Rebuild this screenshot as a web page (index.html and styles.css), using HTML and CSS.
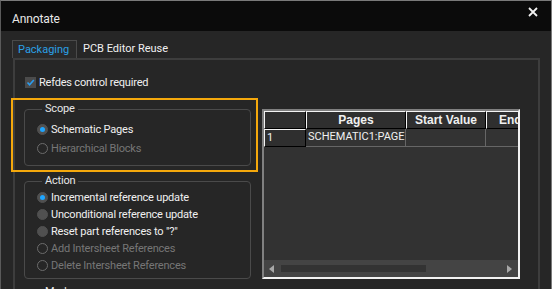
FILE: index.html
```html
<!DOCTYPE html>
<html lang="en">
<head>
    <meta charset="UTF-8">
    <meta name="viewport" content="width=device-width, initial-scale=1.0">
    <title>Annotate</title>
    <link rel="stylesheet" href="styles.css">
</head>
<body>
    <div class="window">
        <div class="titlebar">
            <span class="title">Annotate</span>
            <svg class="close" width="10" height="10" viewBox="0 0 10 10">
                <path d="M1 1L9 9M9 1L1 9" stroke="#f2f2f2" stroke-width="1.8" fill="none"/>
            </svg>
        </div>

        <div class="client">
            <div class="tabs">
                <div class="tab active">Packaging</div>
                <div class="tab">PCB Editor Reuse</div>
            </div>

            <div class="panel">
                <div class="check-row">
                    <span class="checkbox">
                        <svg width="11" height="11" viewBox="0 0 11 11">
                            <path d="M2.5 5.5L4.6 7.8L8.8 3" stroke="#2a9df0" stroke-width="1.6" fill="none"/>
                        </svg>
                    </span>
                    Refdes control required
                </div>

                <div class="content">
                    <div class="options">
                        <fieldset class="group scope">
                            <legend>Scope</legend>
                            <div class="option"><span class="radio checked"></span>Schematic Pages</div>
                            <div class="option disabled"><span class="radio"></span>Hierarchical Blocks</div>
                        </fieldset>

                        <fieldset class="group action">
                            <legend>Action</legend>
                            <div class="option"><span class="radio checked"></span>Incremental reference update</div>
                            <div class="option"><span class="radio filled"></span>Unconditional reference update</div>
                            <div class="option"><span class="radio filled"></span>Reset part references to "?"</div>
                            <div class="option disabled"><span class="radio"></span>Add Intersheet References</div>
                            <div class="option disabled"><span class="radio"></span>Delete Intersheet References</div>
                        </fieldset>

                        <fieldset class="group mode">
                            <legend>Mode</legend>
                        </fieldset>
                    </div>

                    <div class="grid">
                        <div class="grid-row head">
                            <div class="hcell"></div>
                            <div class="hcell">Pages</div>
                            <div class="hcell">Start Value</div>
                            <div class="hcell">End</div>
                        </div>
                        <div class="grid-row">
                            <div class="rowhead">1</div>
                            <div class="cell">SCHEMATIC1:PAGE</div>
                            <div class="cell"></div>
                            <div class="cell"></div>
                        </div>
                        <div class="grid-fill"></div>
                        <div class="hscroll">
                            <span class="arrow left"></span>
                            <span class="thumb"></span>
                            <span class="arrow right"></span>
                        </div>
                    </div>
                </div>
            </div>
        </div>

        <div class="highlight"></div>
    </div>
</body>
</html>
```

FILE: styles.css
```css
body {
    margin: 0;
    background-color: #262626;
    font-family: Roboto, "Liberation Sans", Arial, sans-serif;
    font-size: 11px;
    letter-spacing: -0.2px;
    color: #f0f0f0;
}

.window {
    position: relative;
    width: 552px;
    height: 289px;
    box-sizing: border-box;
    overflow: hidden;
    border-top: 1px solid #7a7a7a;
    border-left: 1px solid #5a5a5a;
    border-right: 1px solid #7a7a7a;
    background-color: #262626;
}

.titlebar {
    height: 30px;
    display: flex;
    align-items: center;
    justify-content: space-between;
    padding: 5px 13px 0 11px;
    box-sizing: border-box;
    background-color: #0b0b0b;
}

.title {
    font-size: 12px;
    letter-spacing: -0.1px;
    color: #e8e8e8;
}

.close {
    margin-top: -13px;
}

/* tabs */
.tabs {
    display: flex;
    align-items: flex-end;
    margin-top: 9px;
    padding-left: 11px;
    height: 18px;
}

.tab {
    height: 18px;
    line-height: 18px;
    padding: 0 6px;
    color: #f0f0f0;
    font-size: 11px;
    letter-spacing: 0;
}

.tab.active {
    box-sizing: border-box;
    width: 65px;
    padding: 0 0 0 5px;
    border: 1px solid #4a4a4a;
    border-bottom: none;
    background-color: #2a2a2a;
    color: #2aa0e6;
}

.panel {
    margin-left: 12px;
    width: 527px;
    height: 240px;
    box-sizing: border-box;
    border: 2px solid #3d3d3d;
    border-bottom: none;
}

.check-row {
    display: flex;
    align-items: center;
    height: 14px;
    margin-top: 15px;
    padding-left: 10px;
}

.checkbox {
    width: 11px;
    height: 11px;
    margin-right: 3px;
    background-color: #4b4b4b;
    display: flex;
}

.content {
    display: flex;
    align-items: flex-start;
    margin-top: 13px;
    padding-left: 9px;
}

.options {
    width: 227px;
}

/* group boxes */
.group {
    margin: 0;
    padding: 4px 0 7px 12px;
    border: 1px solid #4a4a4a;
    border-radius: 4px;
}

.group legend {
    margin-left: 5px;
    padding: 0 3px;
    line-height: 14px;
    color: #e6e6e6;
}

.scope .option {
    height: 19px;
}

.action {
    margin-top: 8px;
    padding-top: 1px;
    padding-bottom: 4px;
}

.action .option {
    height: 17px;
}

.mode {
    margin-top: 6px;
    height: 40px;
}

.option {
    display: flex;
    align-items: center;
}

.option.disabled {
    color: #767676;
}

.radio {
    width: 11px;
    height: 11px;
    box-sizing: border-box;
    border-radius: 50%;
    margin-right: 3px;
    border: 1px solid #6c6c6c;
    display: flex;
    align-items: center;
    justify-content: center;
}

.radio.filled,
.radio.checked {
    border-color: #505050;
    background-color: #505050;
}

.radio.checked::after {
    content: "";
    width: 5px;
    height: 5px;
    border-radius: 50%;
    background-color: #1fa6ff;
}

/* data grid */
.grid {
    margin: 7px 0 0 11px;
    width: 258px;
    height: 170px;
    box-sizing: border-box;
    border-top: 2px solid #808080;
    border-left: 2px solid #808080;
    border-right: 2px solid #f2f2f2;
    border-bottom: 2px solid #f2f2f2;
    background-color: #323232;
    display: flex;
    flex-direction: column;
    overflow: hidden;
    letter-spacing: 0;
}

.grid-row {
    display: grid;
    grid-template-columns: 42px 100px 80px 60px;
    height: 18px;
    flex-shrink: 0;
}

.hcell,
.rowhead {
    box-sizing: border-box;
    border-top: 1px solid #f4f4f4;
    border-left: 1px solid #f4f4f4;
    border-right: 1px solid #000;
    border-bottom: 1px solid #000;
    background-color: #2f2f2f;
}

.hcell {
    font-family: "Liberation Sans", Arial, sans-serif;
    font-weight: bold;
    font-size: 12px;
    line-height: 16px;
    text-align: center;
    white-space: nowrap;
    overflow: hidden;
}

.hcell:last-child {
    text-align: left;
    padding-left: 12px;
}

.rowhead,
.cell {
    font-family: Roboto, "Liberation Sans", Arial, sans-serif;
    font-size: 11px;
    line-height: 16px;
    padding-left: 2px;
    white-space: nowrap;
    overflow: hidden;
}

.cell {
    box-sizing: border-box;
    border-right: 1px solid #666;
    border-bottom: 1px solid #666;
    background-color: #333;
}

.grid-fill {
    flex: 1;
}

.hscroll {
    height: 17px;
    flex-shrink: 0;
    background-color: #444;
    display: flex;
    align-items: center;
    padding: 0 6px 0 5px;
}

.thumb {
    width: 145px;
    height: 7px;
    margin-left: 7px;
    background-color: #333;
}

.arrow {
    width: 0;
    height: 0;
    border-top: 4.5px solid transparent;
    border-bottom: 4.5px solid transparent;
}

.arrow.left {
    border-right: 5px solid #a8a8a8;
}

.arrow.right {
    margin-left: auto;
    border-left: 5px solid #a8a8a8;
}

/* annotation overlay */
.highlight {
    position: absolute;
    left: 10px;
    top: 97px;
    width: 247px;
    height: 74px;
    box-sizing: border-box;
    border: 2px solid #f4a80c;
}
```
